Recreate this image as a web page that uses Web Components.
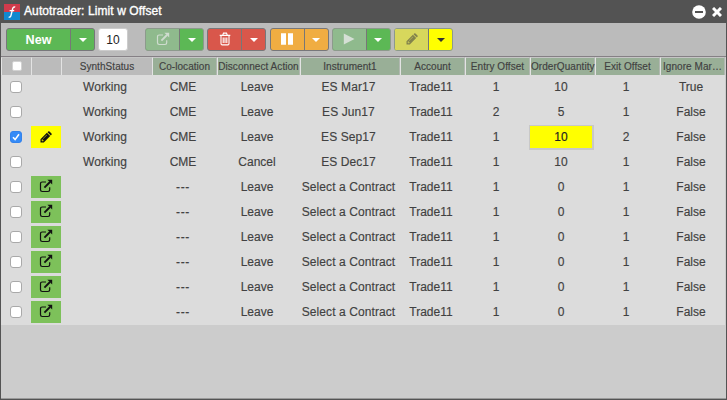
<!DOCTYPE html>
<html lang="en"><head><meta charset="utf-8"><title>Autotrader: Limit w Offset</title>
<style>html,body{margin:0;height:100%;overflow:hidden}body{font-family:"Liberation Sans",Arial,sans-serif;color:#414141}</style>
</head><body><autotrader-window></autotrader-window>
<script>
const icons={
 open:'<svg viewBox="0 0 14 14" width="14" height="14" fill="none" stroke="currentColor"><path d="M7 3H3.2Q1.5 3 1.5 4.7V10.8Q1.5 12.5 3.2 12.5H9Q10.7 12.5 10.7 10.8V8.3" stroke-width="1.2"/><path d="M5.4 8.6L11 3" stroke-width="1.9"/><path d="M8.4 .8H13.2V5.6Z" fill="currentColor" stroke="none"/></svg>',
 trash:'<svg viewBox="0 0 12 14" width="12" height="14" fill="none" stroke="currentColor" stroke-width="1.1"><path d="M.7 3.4H11.3M3.8 3L4.5 1.1H7.5L8.2 3M2 3.6V11.4Q2 12.9 3.2 12.9H8.8Q10 12.9 10 11.4V3.6M4.2 5.4V11M6 5.4V11M7.8 5.4V11"/></svg>',
 pause:'<svg viewBox="0 0 12 12" width="12" height="12" fill="currentColor"><path d="M0 .3H5V11.8H0ZM7 .3H12V11.8H7Z"/></svg>',
 play:'<svg viewBox="0 0 12 12" width="12" height="12" fill="currentColor"><path d="M.8 .5L11.5 6L.8 11.5Z"/></svg>',
 pencil:'<svg viewBox="0 0 12 12" width="12" height="12" fill="currentColor"><path fill-rule="evenodd" d="M.5 11.5V8.2L6.9 1.8L10.2 5.1L3.8 11.5ZM1.7 8.8L1.5 9.4H2.5V10.4L3.1 10.3L3.7 9.7L2.3 8.2ZM3.2 7.8L7 4L6.7 3.7L2.9 7.5Z"/><path d="M7.5 1.2L8.2 .5Q8.8 0 9.5 .5L11.5 2.5Q12 3.2 11.5 3.8L10.8 4.5Z"/></svg>',
 caret:'<svg viewBox="0 0 8 4" width="8" height="4" fill="currentColor"><path d="M0 0H8L4 4Z"/></svg>'
};
function define(name,render){customElements.define(name,class extends HTMLElement{
 connectedCallback(){if(!this.shadowRoot)this.attachShadow({mode:'open'}).innerHTML=render(this)}
})}
define('app-icon',e=>`<style>:host{display:block;line-height:0}svg{display:block}</style>${icons[e.getAttribute('name')]}`);
define('title-bar',()=>`<style>:host{display:flex;height:23px;background:#535353;color:#fff;align-items:center;padding:0 5px 0 4px;box-sizing:border-box}
.t{flex:1;font-size:12px;letter-spacing:.1px;-webkit-text-stroke:.35px #fff;margin-left:4px;line-height:22px;height:23px}svg{display:block}.c{margin-left:6px}</style>
<svg width="16" height="16" viewBox="0 0 16 16"><path fill="#d13b4c" d="M0 0H16V8H0Z"/><path fill="#1189cf" d="M0 8H16V16H0Z"/><path d="M11.2 3.2Q9.5 2.3 8.7 4.5L7 11.3Q6.4 13.8 4.7 12.9M5.6 6.6H10.2" fill="none" stroke="#fff" stroke-width="1.4"/></svg>
<div class="t"><slot></slot></div>
<svg width="14" height="14" viewBox="0 0 14 14"><circle cx="7" cy="7" r="6.8" fill="#fff"/><path d="M3 7H11" stroke="#535353" stroke-width="2"/></svg>
<svg class="c" width="10" height="10" viewBox="0 0 10 10"><path d="M1 1L9 9M9 1L1 9" stroke="#fff" stroke-width="3"/></svg>`);
define('split-button',e=>`<style>:host{display:flex;box-sizing:border-box;height:23px;width:${e.getAttribute('w')||59}px;border:1px solid #77777a;border-radius:3px;overflow:hidden;background:${e.getAttribute('bg')};color:${e.getAttribute('fg')||'#fff'}}
:host([disabled]){border-color:#8c9a8c}
.m{flex:1;display:flex;align-items:center;justify-content:center;font:bold 12.6px "Liberation Sans",sans-serif;background:${e.getAttribute('main')||'transparent'};color:${e.getAttribute('ink')||'inherit'}}
.d{width:23px;border-left:1px solid #777;display:flex;align-items:center;justify-content:center}</style><div class="m"><slot></slot></div><div class="d"><app-icon name="caret"></app-icon></div>`);
define('check-box',e=>{const s=e.hasAttribute('small');return `<style>:host{display:block;box-sizing:border-box;width:${s?10:12}px;height:${s?10:12}px;border-radius:${s?2:3}px;background:#fff;border:1px solid ${s?'#d2d2d2':'#a9a9a9'}}
:host([checked]){background:#358bf7;border-color:#3382eb}svg{display:block}</style>${e.hasAttribute('checked')?'<svg width="10" height="10" viewBox="0 0 10 10"><path d="M2 5.3L4.1 7.6L8 2.2" fill="none" stroke="#fff" stroke-width="1.6"/></svg>':''}`});
define('tool-bar',()=>`<style>:host{display:flex;box-sizing:border-box;height:34px;background:#bbb;padding:5px 5px 0;border-bottom:1px solid #858085}
.n{margin:0 17px 0 3px;width:30px;height:23px;box-sizing:border-box;border:1px solid #ccc;border-radius:3px;background:#fff;font-size:12px;line-height:22px;text-align:center;color:#222}.g{display:flex;gap:3.25px}app-icon{position:relative;top:-1px}</style>
<split-button w="89" bg="#5cb855">New</split-button><div class="n">10</div><div class="g">
<split-button disabled main="#8fba8d" ink="#cfdccf" bg="#5cb855"><app-icon name="open"></app-icon></split-button>
<split-button bg="#d9574b"><app-icon name="trash"></app-icon></split-button>
<split-button bg="#f0ad42"><app-icon name="pause"></app-icon></split-button>
<split-button disabled main="#8fba8d" ink="#d5dfd5" bg="#5cb855"><app-icon name="play"></app-icon></split-button>
<split-button disabled main="#d7d75c" ink="#83834c" bg="#ff0" fg="#333"><app-icon name="pencil"></app-icon></split-button></div>`);
const head=['SynthStatus','Co-location','Disconnect Action','Instrument1','Account','Entry Offset','OrderQuantity','Exit Offset','Ignore Mar…'];
const rows=[['Working','CME','Leave','ES Mar17','Trade11','1','10','1','True'],['Working','CME','Leave','ES Jun17','Trade11','2','5','1','False'],['Working','CME','Leave','ES Sep17','Trade11','1','10','2','False'],['Working','CME','Cancel','ES Dec17','Trade11','1','10','1','False']];
while(rows.length<10)rows.push(['','---','Leave','Select a Contract','Trade11','1','0','1','False']);
const grid='display:grid;grid-template-columns:30px 30px 91px 65px 83px 100px repeat(5,65px);width:724px;';
define('grid-header',()=>`<style>:host{${grid}height:18px;background:#bbb}
div{box-sizing:border-box;border-left:1px solid #e3e3e3;border-bottom:1px solid #aaa;border-top:1px solid #c5c5c5;font-size:10px;letter-spacing:.06px;line-height:18px;text-align:center;white-space:nowrap;-webkit-text-stroke:.15px}
div.g{background:#99af97;border-right:1px solid #b1b8b1}.c{display:flex;justify-content:center;padding-top:3px}</style><div class="c"><check-box small></check-box></div><div></div>${head.map((h,i)=>`<div class="${i?'g':''}">${h}</div>`).join('')}`);
define('grid-row',e=>{const i=+e.getAttribute('index'),r=rows[i];return `<style>:host{${grid}height:25px;background:#dcdcdc}
.v{font-size:12px;line-height:24px;text-align:center;padding-right:3px;white-space:nowrap;-webkit-text-stroke:.15px}
.v.w{letter-spacing:.09px}.v.dash{letter-spacing:.6px}.c{padding:6px 0 0 9px}.i{height:22px;margin-top:1px;display:flex;justify-content:center;align-items:center;color:#111}.new{background:#7dc15a}.edit{background:#ff0}.new app-icon{margin-top:-2px}.edit app-icon{margin:-1px 1px 0 0}
.sel{background:#ff0;border:1px solid #c8c8c8;border-right-width:2px;border-bottom-width:2px;box-sizing:border-box;line-height:22px;margin-left:-1px;margin-right:1px;padding-right:0;color:#222}</style>
<div class="c"><check-box ${i==2?'checked':''}></check-box></div><div class="i ${i==2?'edit':i>3?'new':''}">${i==2?'<app-icon name="pencil"></app-icon>':i>3?'<app-icon name="open"></app-icon>':''}</div>
${r.map((t,j)=>`<div class="v ${j==3?'w':''} ${t=='---'?'dash':''} ${i==2&&j==6?'sel':''}">${t}</div>`).join('')}`});
define('data-grid',()=>`<style>:host{display:flex;flex-direction:column;flex:1;background:#ccc}</style><grid-header></grid-header>${rows.map((_,i)=>`<grid-row index="${i}"></grid-row>`).join('')}`);
define('autotrader-window',()=>`<style>:host{display:flex;flex-direction:column;width:727px;height:400px;background:#ccc}.b{flex:1;display:flex;flex-direction:column;border:solid #535353;border-width:0 1px 1px;box-shadow:inset 0 -1px #999}data-grid{margin-bottom:1px}</style><title-bar>Autotrader: Limit w Offset</title-bar><div class="b"><tool-bar></tool-bar><data-grid></data-grid></div>`);
</script></body></html>
